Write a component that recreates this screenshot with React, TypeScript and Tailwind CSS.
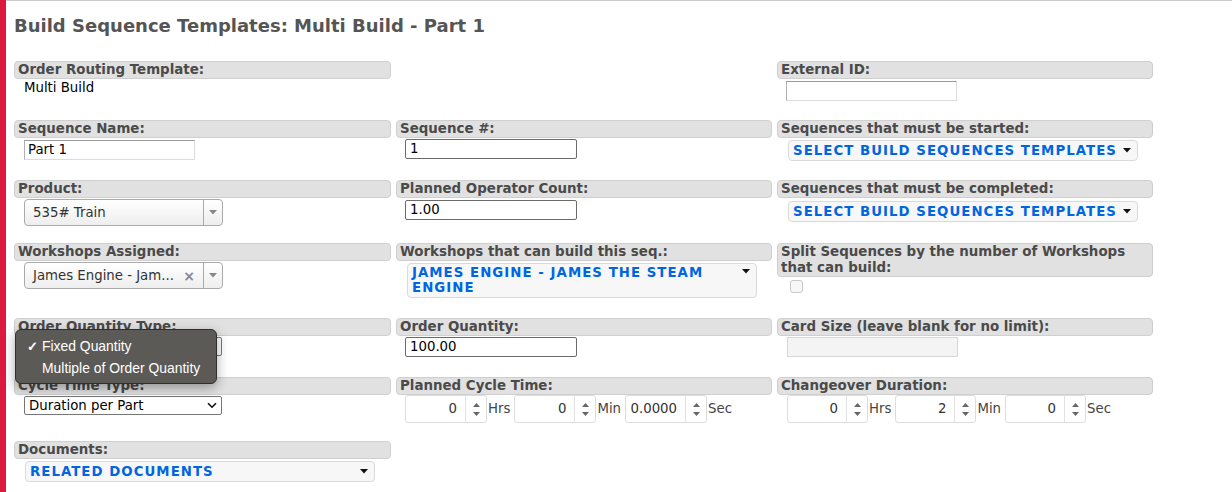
import React from 'react'

const verdana = "font-['DejaVu_Sans','Verdana',sans-serif]"

function Label({ children, tall }: { children: React.ReactNode; tall?: boolean }) {
  return (
    <div
      className={`${tall ? 'h-[34px]' : 'h-[18px]'} border border-[#cfcfcf] bg-[#e1e1e1] rounded-[4px] px-[3px] text-[13.4px] leading-[16px] font-bold text-[#4a4a4a] whitespace-nowrap`}
    >
      {children}
    </div>
  )
}

function TextInput({ value, dark, disabled }: { value?: string; dark?: boolean; disabled?: boolean }) {
  if (dark) {
    return (
      <div className="w-[172px] h-[20px] border border-[#6b6b6b] rounded-[2px] bg-white px-[4px] text-[13.3px] leading-[18px] text-black">
        {value}
      </div>
    )
  }
  if (disabled) {
    return <div className="w-[171px] h-[20px] border border-[#d6d6d6] bg-[#f4f4f4]" />
  }
  return (
    <div className="w-[171px] h-[20px] border border-[#dcdcdc] border-t-[#9a9a9a] border-l-[#b0b0b0] bg-white px-[3px] text-[13.3px] leading-[18px] text-black">
      {value}
    </div>
  )
}

function Caret({ color = '#111' }: { color?: string }) {
  return (
    <svg width="8" height="5" viewBox="0 0 8 5">
      <path d="M0 0 L8 0 L4 4.5 Z" fill={color} />
    </svg>
  )
}

function Select2({ value, clear }: { value: string; clear?: boolean }) {
  return (
    <div className="w-[199px] h-[27px] border border-[#aaaaaa] rounded-[4px] bg-linear-to-b from-white to-[#eeeeee] flex items-center">
      <span className="flex-1 pl-[8px] text-[13.3px] text-[#333] whitespace-nowrap">{value}</span>
      {clear && <span className="mr-[8px] text-[14px] leading-none text-[#888] font-bold">×</span>}
      <span className="w-[19px] h-full border-l border-[#aaaaaa] flex items-center justify-center">
        <Caret color="#888" />
      </span>
    </div>
  )
}

function MultiButton({ children, w, twoLine }: { children: React.ReactNode; w: string; twoLine?: boolean }) {
  return (
    <div
      className={`${w} ${twoLine ? 'h-[35px] items-start pt-[1px]' : 'h-[21px] items-center'} flex border border-[#dadada] rounded-[4px] bg-[#f7f7f7] pl-[4px] pr-[6px]`}
    >
      <span
        className={`flex-1 text-[13.3px] leading-[15px] font-bold tracking-[1.05px] text-[#0066e0] uppercase ${twoLine ? '' : 'whitespace-nowrap'}`}
      >
        {children}
      </span>
      <span className={`${twoLine ? 'mt-[4px]' : ''} flex`}>
        <Caret />
      </span>
    </div>
  )
}

function NativeSelect({ value }: { value: string }) {
  return (
    <div className="w-[198px] h-[19px] border border-[#767676] rounded-[2px] bg-white flex items-center pl-[4px] pr-[4px]">
      <span className="flex-1 text-[13.3px] text-black">{value}</span>
      <svg width="10" height="7" viewBox="0 0 10 7">
        <path d="M1 1.2 L5 5.2 L9 1.2" stroke="#111" strokeWidth="1.6" fill="none" />
      </svg>
    </div>
  )
}

function Spinner({ value, unit, w = 'w-[82px]' }: { value: string; unit: string; w?: string }) {
  return (
    <div className="flex items-center">
      <div className={`${w} h-[28px] flex border border-[#dddddd] rounded-[3px] bg-white`}>
        <span className="flex-1 text-right pr-[8px] text-[13.3px] leading-[26px] text-[#333]">{value}</span>
        <span className="w-[21px] border-l border-[#e2e2e2] flex flex-col items-center justify-center gap-[5px]">
          <svg width="7" height="4" viewBox="0 0 7 4">
            <path d="M0 4 L3.5 0 L7 4 Z" fill="#666" />
          </svg>
          <svg width="7" height="4" viewBox="0 0 7 4">
            <path d="M0 0 L3.5 4 L7 0 Z" fill="#666" />
          </svg>
        </span>
      </div>
      <span className="ml-[1px] mr-[4px] text-[13.3px] text-[#444]">{unit}</span>
    </div>
  )
}

export default function App() {
  return (
    <div className={`w-[1232px] h-[492px] flex bg-white overflow-hidden ${verdana}`}>
      <div className="w-[6px] bg-[#dc1a40]" />
      <main className="flex-1 border-t border-[#cccccc] pl-[8px]">
        {/* Title */}
        <div className="h-[60px] pt-[14px]">
          <h1 className="text-[18px] leading-[22px] font-bold text-[#555]">
            Build Sequence Templates: Multi Build - Part 1
          </h1>
        </div>

        <div className="grid grid-cols-[377px_376px_376px] gap-x-[5px]">
          {/* row 1 */}
          <div className="h-[59px]">
            <Label>Order Routing Template:</Label>
            <div className="pl-[10px] pt-[1px] text-[13.3px] leading-[16px] text-black">Multi Build</div>
          </div>
          <div className="h-[59px]" />
          <div className="h-[59px]">
            <Label>External ID:</Label>
            <div className="pl-[9px] pt-[2px]">
              <TextInput />
            </div>
          </div>

          {/* row 2 */}
          <div className="h-[60px]">
            <Label>Sequence Name:</Label>
            <div className="pl-[10px] pt-[2px]">
              <TextInput value="Part 1" />
            </div>
          </div>
          <div className="h-[60px]">
            <Label>Sequence #:</Label>
            <div className="pl-[9px] pt-[1px]">
              <TextInput value="1" dark />
            </div>
          </div>
          <div className="h-[60px]">
            <Label>Sequences that must be started:</Label>
            <div className="pl-[11px] pt-[2px]">
              <MultiButton w="w-[350px]">Select Build Sequences Templates</MultiButton>
            </div>
          </div>

          {/* row 3 */}
          <div className="h-[63px]">
            <Label>Product:</Label>
            <div className="pl-[10px] pt-[1px]">
              <Select2 value="535# Train" />
            </div>
          </div>
          <div className="h-[63px]">
            <Label>Planned Operator Count:</Label>
            <div className="pl-[9px] pt-[2px]">
              <TextInput value="1.00" dark />
            </div>
          </div>
          <div className="h-[63px]">
            <Label>Sequences that must be completed:</Label>
            <div className="pl-[11px] pt-[3px]">
              <MultiButton w="w-[350px]">Select Build Sequences Templates</MultiButton>
            </div>
          </div>

          {/* row 4 */}
          <div className="h-[75px]">
            <Label>Workshops Assigned:</Label>
            <div className="pl-[10px] pt-[1px]">
              <Select2 value="James Engine - Jam..." clear />
            </div>
          </div>
          <div className="h-[75px]">
            <Label>Workshops that can build this seq.:</Label>
            <div className="pl-[11px] pt-[2px]">
              <MultiButton w="w-[350px]" twoLine>
                James Engine - James the Steam Engine
              </MultiButton>
            </div>
          </div>
          <div className="h-[75px]">
            <Label tall>
              Split Sequences by the number of Workshops
              <br />
              that can build:
            </Label>
            <div className="pl-[13px] pt-[3px]">
              <div className="w-[13px] h-[13px] border border-[#c8c8c8] rounded-[3px] bg-[#f7f7f7]" />
            </div>
          </div>

          {/* row 5 */}
          <div className="h-[59px] relative">
            <Label>Order Quantity Type:</Label>
            <div className="pl-[10px] pt-[1px]">
              <NativeSelect value="Fixed Quantity" />
            </div>
            {/* open native menu */}
            <div className="absolute left-[1px] top-[11px] w-[202px] h-[55px] rounded-[6px] bg-[#5c5a56] border border-[#2e2e2c] shadow-[0_4px_12px_rgba(0,0,0,0.35)] font-['Liberation_Sans',sans-serif] text-[13.9px] text-white py-[5px]">
              <div className="h-[22px] flex items-center">
                <span className="ml-[11px] w-[14px] text-[13px] font-bold leading-none">✓</span>
                <span className="ml-[1px]">Fixed Quantity</span>
              </div>
              <div className="h-[22px] flex items-center">
                <span className="ml-[26px]">Multiple of Order Quantity</span>
              </div>
            </div>
          </div>
          <div className="h-[59px]">
            <Label>Order Quantity:</Label>
            <div className="pl-[9px] pt-[1px]">
              <TextInput value="100.00" dark />
            </div>
          </div>
          <div className="h-[59px]">
            <Label>Card Size (leave blank for no limit):</Label>
            <div className="pl-[10px] pt-[1px]">
              <TextInput disabled />
            </div>
          </div>

          {/* row 6 */}
          <div className="h-[64px]">
            <Label>Cycle Time Type:</Label>
            <div className="pl-[10px] pt-[1px]">
              <NativeSelect value="Duration per Part" />
            </div>
          </div>
          <div className="h-[64px]">
            <Label>Planned Cycle Time:</Label>
            <div className="pl-[9px] flex">
              <Spinner value="0" unit="Hrs" />
              <Spinner value="0" unit="Min" />
              <Spinner value="0.0000" unit="Sec" />
            </div>
          </div>
          <div className="h-[64px]">
            <Label>Changeover Duration:</Label>
            <div className="pl-[10px] flex">
              <Spinner value="0" unit="Hrs" w="w-[81px]" />
              <Spinner value="2" unit="Min" w="w-[81px]" />
              <Spinner value="0" unit="Sec" w="w-[81px]" />
            </div>
          </div>

          {/* row 7 */}
          <div>
            <Label>Documents:</Label>
            <div className="pl-[11px] pt-[2px]">
              <MultiButton w="w-[350px]">Related Documents</MultiButton>
            </div>
          </div>
        </div>
      </main>
    </div>
  )
}
